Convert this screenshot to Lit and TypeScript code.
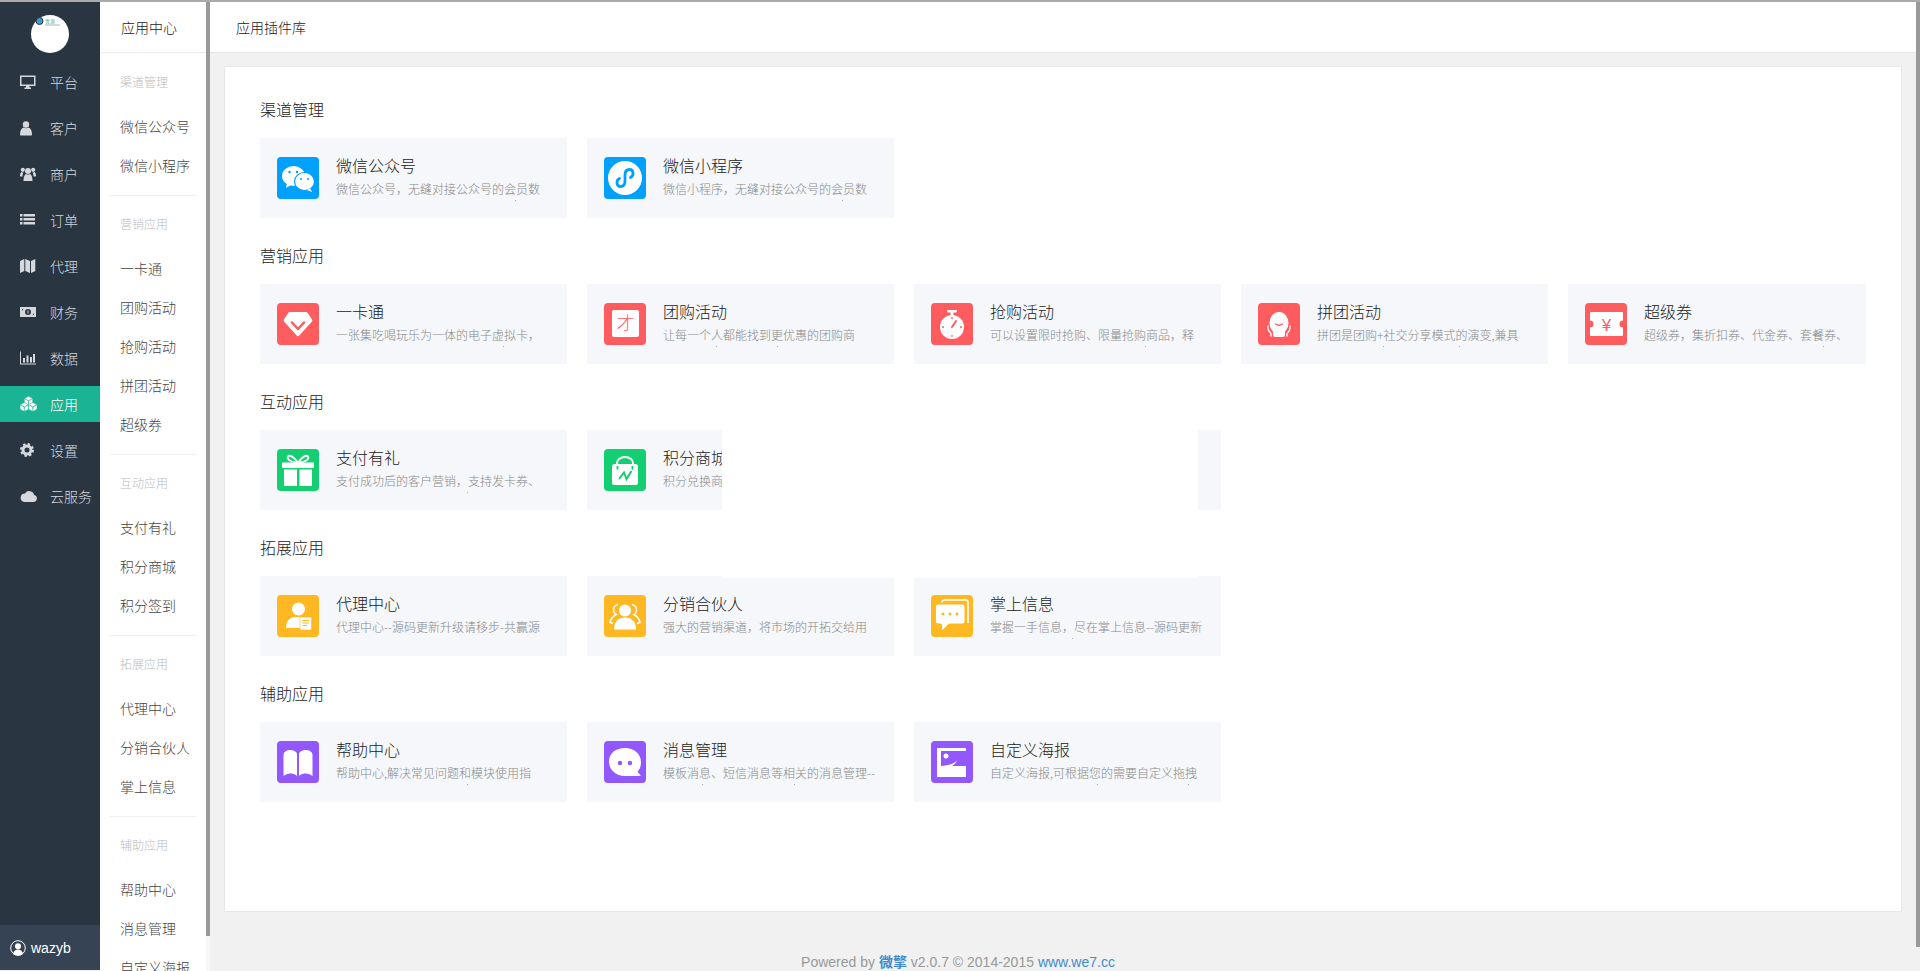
import { LitElement, html, css, svg, TemplateResult } from "lit";
import { customElement } from "lit/decorators.js";

const RED = "#ff5c5f", GREEN = "#14cf72", BLUE = "#00a0ff", AMBER = "#ffb822", PURPLE = "#9257ff";

const hex = (cx: number, cy: number) => svg`
  <polygon points="${cx},${cy - 4.6} ${cx + 4.2},${cy - 2.3} ${cx + 4.2},${cy + 2.3} ${cx},${cy + 4.6} ${cx - 4.2},${cy + 2.3} ${cx - 4.2},${cy - 2.3}" fill="#fff" stroke="#1ab394" stroke-width=".5"/>
  <path d="M${cx - 4.2} ${cy - 2.3}L${cx} ${cy}L${cx + 4.2} ${cy - 2.3}M${cx} ${cy}V${cy + 4.6}" stroke="#1ab394" stroke-width=".8" fill="none"/>`;

const cardIcons: Record<string, TemplateResult> = {
  wechat: svg`<ellipse cx="16.500" cy="19" rx="11.500" ry="10" fill="#fff"/><path d="M10 26l-1 5 5-3z" fill="#fff"/>
    <circle cx="12.500" cy="15" r="1.200" fill="${BLUE}"/><circle cx="20" cy="15" r="1.200" fill="${BLUE}"/>
    <ellipse cx="27.500" cy="24.500" rx="10" ry="9" fill="#fff" stroke="${BLUE}" stroke-width="1.200"/><path d="M33 31l2 4-5-2z" fill="#fff"/>
    <circle cx="24" cy="22" r="1" fill="${BLUE}"/><circle cx="31" cy="22" r="1" fill="${BLUE}"/>`,
  mini: svg`<circle cx="21" cy="21" r="17" fill="#fff"/><path d="M15.500 21.500C12 23 12 29.500 16.500 29.500 20 29.500 21 26.500 21 24V18C21 15.500 22 12.500 25.500 12.500 30 12.500 30 19 26.500 20.500" fill="none" stroke="${BLUE}" stroke-width="2.800" stroke-linecap="round"/>`,
  diamond: svg`<path d="M13 9h16a2 2 0 0 1 1.700.900l4.300 6.300a2 2 0 0 1-.2 2.500L22.500 32.300a2 2 0 0 1-3 0L7.200 18.700a2 2 0 0 1-.2-2.500l4.300-6.300A2 2 0 0 1 13 9z" fill="#fff"/><path d="M15 19.500l6 6.500 6-6.500" fill="none" stroke="${RED}" stroke-width="2.500" stroke-linecap="round" stroke-linejoin="round"/>`,
  square: svg`<rect x="8" y="7" width="27" height="27" rx="2" fill="#fff"/><text x="21.500" y="27" text-anchor="middle" font-size="18" fill="${RED}" font-family="Noto Sans CJK SC, sans-serif">才</text>`,
  watch: svg`<rect x="16" y="7" width="10" height="2.600" rx="1" fill="#fff"/><rect x="19.500" y="9" width="3" height="4" fill="#fff"/><circle cx="21" cy="24" r="12" fill="#fff"/>
    <path d="M21 24l4-6" stroke="${RED}" stroke-width="2" stroke-linecap="round"/><path d="M21 14v2M21 32v2M11 24h2M29 24h2" stroke="${RED}" stroke-width="1.300"/>`,
  face: svg`<ellipse cx="21" cy="20" rx="9.500" ry="11" fill="#fff"/><path d="M15 28h12v4a2 2 0 0 1-2 2h-8a2 2 0 0 1-2-2z" fill="#fff"/><path d="M17.500 21q3.500 2.500 7 0" fill="none" stroke="${RED}" stroke-width="1.300" stroke-linecap="round"/>
    <path d="M10 23q-1 4 3 7.500v2.500M32 23q1 4-3 7.500v2.500" fill="none" stroke="#fff" stroke-width="1.300" stroke-linecap="round"/>`,
  ticket: svg`<path d="M6 9h31a1 1 0 0 1 1 1v7.500a3.500 3.500 0 0 0 0 7V32a1 1 0 0 1-1 1H6a1 1 0 0 1-1-1v-7.500a3.500 3.500 0 0 0 0-7V10a1 1 0 0 1 1-1z" fill="#fff"/><text x="21.500" y="27.500" text-anchor="middle" font-size="17" fill="${RED}" font-family="Liberation Sans, sans-serif">¥</text>`,
  gift: svg`<rect x="5" y="13.500" width="32" height="5.500" fill="#fff"/><rect x="7" y="20.500" width="13" height="16.500" fill="#fff"/><rect x="22.500" y="20.500" width="12.500" height="16.500" fill="#fff"/>
    <path d="M20.500 13C17 8 12.500 5.500 11 7.500 9.500 10 13 13 20 13.500zM21.500 13C25 8 29.500 5.500 31 7.500 32.500 10 29 13 22 13.500z" fill="none" stroke="#fff" stroke-width="1.800"/>`,
  bag: svg`<rect x="8" y="15" width="26" height="21" rx="2.500" fill="#fff"/><path d="M13 18v-4a8 6 0 0 1 16 0v4" fill="none" stroke="#fff" stroke-width="2"/><path d="M13.500 17v3.500M28.500 17v3.500" stroke="${GREEN}" stroke-width="1.800"/><path d="M15 30l5-6.500 2.500 6.500 5-8" fill="none" stroke="${GREEN}" stroke-width="2"/>`,
  agent: svg`<ellipse cx="21.500" cy="14" rx="6.500" ry="6.500" fill="#fff"/><path d="M9 33c0-6 3-11 9-11h6v11z" fill="#fff"/><rect x="23" y="22" width="11.500" height="13" rx="1" fill="#fff" stroke="${AMBER}" stroke-width=".6"/><path d="M25.500 25.500h6.500M25.500 28h6.500M25.500 30.500h4.500" stroke="${AMBER}" stroke-width="1"/>`,
  partner: svg`<circle cx="21" cy="15.500" r="6" fill="#fff"/><path d="M10 34.500c0-7.500 4-12 11-12s11 4.500 11 12z" fill="#fff"/>
    <path d="M14 9.500q-5 1-4.500 6.500 1 3 2.500 3.500-5 3-6 8l3 1M28 9.500q5 1 4.500 6.500-1 3-2.500 3.500 5 3 6 8l-3 1" fill="none" stroke="#fff" stroke-width="1.500"/>`,
  chat: svg`<path d="M11 7.500q0-2.500 2.500-2.500h21q2.500 0 2.500 2.500V28" fill="none" stroke="#fff" stroke-width="1.600"/><path d="M7 9h24.500q2.500 0 2.500 2.500v15q0 2.500-2.500 2.500H18l-7.500 7.500V29H7q-2.500 0-2.500-2.500v-15Q4.500 9 7 9z" fill="#fff" stroke="${AMBER}" stroke-width="1"/><circle cx="12" cy="19" r="1.500" fill="${AMBER}"/><circle cx="19" cy="19" r="1.500" fill="${AMBER}"/><circle cx="26" cy="19" r="1.500" fill="${AMBER}"/>`,
  book: svg`<path d="M6.500 14c0-3 3-5 7-5 3 0 5.500 1.500 6.500 3.500V35c-2-2-4.500-2.500-7-2.500-2.500 0-4.500 1-6.500 2.500zM35.500 14c0-3-3-5-7-5-3 0-5.500 1.500-6.500 3.500V35c2-2 4.500-2.500 7-2.500 2.500 0 4.500 1 6.500 2.500z" fill="#fff"/>`,
  bubble: svg`<path d="M21 7c9 0 16 6 16 14 0 4-1 7-3.500 10l3.500 3.500-2 .5H21c-9 0-16-6-16-14.500S12 7 21 7z" fill="#fff"/><circle cx="16" cy="22" r="2.200" fill="${PURPLE}"/><circle cx="26" cy="22" r="2.200" fill="${PURPLE}"/>`,
  poster: svg`<rect x="6" y="7" width="29" height="29" fill="#fff"/><path d="M10 10h25v15H21q4-2 5-6c-2 3-6 5-16 6z" fill="${PURPLE}"/><circle cx="15" cy="15" r="2.500" fill="#fff"/>`,
};

const navIcons: Record<string, TemplateResult> = {
  desktop: svg`<path fill-rule="evenodd" d="M0 1.500h15.500v10.500H9.500v1.500H11V15H4.500v-1.500H6V12H0zM1.500 3v7.500h12.500V3z"/>`,
  user: svg`<circle cx="6" cy="4.500" r="3.200"/><path d="M0 14.500c0-4 1.500-6.500 3.500-7 1.500 1 3.500 1 5 0 2 .5 3.500 3 3.500 7 0 .5-.5 1-1 1H1c-.5 0-1-.5-1-1z"/>`,
  users: svg`<circle cx="8" cy="5" r="3"/><circle cx="2.800" cy="3.800" r="2.100"/><circle cx="13.200" cy="3.800" r="2.100"/><path d="M3.500 15c0-4 1-6.500 2.500-7 1 .8 3 .8 4 0 1.500.5 2.500 3 2.500 7zM0 10c0-2 .5-3.500 1.500-4 .5.500 1.500.500 2 .500-.5 1-1 2.500-1 4H.5zM16 10c0-2-.5-3.500-1.500-4-.5.500-1.500.500-2 .500.5 1 1 2.500 1 4h2z"/>`,
  list: svg`<path d="M0 2h2.500v2.500H0zM3.500 2H15v2.500H3.500zM0 6h2.500v2.500H0zM3.500 6H15v2.500H3.500zM0 10h2.500v2.500H0zM3.500 10H15v2.500H3.500z"/>`,
  map: svg`<path d="M0 3L4.300 1v12l-4.300 2zM5.300 1l4.700 2v12l-4.700-2zM11 3l4.300-2v12l-4.300 2z"/>`,
  money: svg`<path fill-rule="evenodd" d="M0 3h16v10H0zM8 5a3 3 0 1 0 0 6 3 3 0 0 0 0-6zM2 5h1.500L2 6.500zM14 11h-1.500l1.500-1.500z"/><path d="M7.500 6.500h1v3h-1z"/>`,
  chart: svg`<path d="M0 1.500h1V13.500h15v1H0z"/><path d="M3 8h2v4.500H3zM6.500 5.500h2v7h-2zM10 7h2v5.500h-2zM13 4h2v8.500h-2z"/>`,
  cubes: svg`${hex(8.5, 4.8)}${hex(4.3, 11)}${hex(12.8, 11)}`,
  cog: svg`<circle cx="7" cy="8" r="4" fill="none" stroke="currentColor" stroke-width="3"/><circle cx="7" cy="8" r="6" fill="none" stroke="currentColor" stroke-width="2" stroke-dasharray="2.400 2.300"/>`,
  cloud: svg`<path d="M4 14h9.500a3.500 3.500 0 0 0 .7-6.900A5 5 0 0 0 5 5.500 4.300 4.300 0 0 0 4 14z"/>`,
};

const mainNav = [
  ["desktop", "平台"], ["user", "客户"], ["users", "商户"], ["list", "订单"], ["map", "代理"],
  ["money", "财务"], ["chart", "数据"], ["cubes", "应用"], ["cog", "设置"], ["cloud", "云服务"],
];

interface App { name: string; desc: string; icon: string; dots?: number[]; }
interface Group { title: string; color: string; apps: App[]; }

const groups: Group[] = [
  { title: "渠道管理", color: BLUE, apps: [
    { name: "微信公众号", desc: "微信公众号，无缝对接公众号的会员数", icon: "wechat", dots: [255] },
    { name: "微信小程序", desc: "微信小程序，无缝对接公众号的会员数", icon: "mini", dots: [255] },
  ]},
  { title: "营销应用", color: RED, apps: [
    { name: "一卡通", desc: "一张集吃喝玩乐为一体的电子虚拟卡，", icon: "diamond", dots: [243] },
    { name: "团购活动", desc: "让每一个人都能找到更优惠的团购商", icon: "square", dots: [129, 190] },
    { name: "抢购活动", desc: "可以设置限时抢购、限量抢购商品，释", icon: "watch", dots: [231] },
    { name: "拼团活动", desc: "拼团是团购+社交分享模式的演变,兼具", icon: "face", dots: [142, 218] },
    { name: "超级券", desc: "超级券，集折扣券、代金券、套餐券、", icon: "ticket", dots: [255] },
  ]},
  { title: "互动应用", color: GREEN, apps: [
    { name: "支付有礼", desc: "支付成功后的客户营销，支持发卡券、", icon: "gift", dots: [207] },
    { name: "积分商城", desc: "积分兑换商品，提升会员活跃度", icon: "bag" },
    { name: "积分签到", desc: "积分签到，提升会员活跃度", icon: "bag" },
  ]},
  { title: "拓展应用", color: AMBER, apps: [
    { name: "代理中心", desc: "代理中心--源码更新升级请移步-共赢源", icon: "agent" },
    { name: "分销合伙人", desc: "强大的营销渠道，将市场的开拓交给用", icon: "partner" },
    { name: "掌上信息", desc: "掌握一手信息，尽在掌上信息--源码更新", icon: "chat", dots: [158] },
  ]},
  { title: "辅助应用", color: PURPLE, apps: [
    { name: "帮助中心", desc: "帮助中心,解决常见问题和模块使用指", icon: "book", dots: [207] },
    { name: "消息管理", desc: "模板消息、短信消息等相关的消息管理--", icon: "bubble", dots: [115, 207] },
    { name: "自定义海报", desc: "自定义海报,可根据您的需要自定义拖拽", icon: "poster", dots: [183, 274] },
  ]},
];

@customElement("app-root")
export class AppRoot extends LitElement {
  static styles = css`
    :host {
      display: flex;
      height: 971px;
      box-sizing: border-box;
      border-top: 2px solid #aaa;
      overflow: hidden;
      background: #f1f1f1;
      font-family: "Noto Sans CJK SC", "Liberation Sans", sans-serif;
      font-weight: 300;
      color: #222;
    }
    .side {
      width: 100px;
      flex: none;
      height: 968px;
      background: #2a3542;
      display: flex;
      flex-direction: column;
      align-items: stretch;
      padding-top: 13px;
      box-sizing: border-box;
    }
    .logo {
      width: 38px;
      height: 38px;
      margin: 0 auto 11px;
      display: block;
    }
    .item {
      height: 36px;
      margin-bottom: 10px;
      display: flex;
      align-items: center;
      padding-left: 20px;
      font-size: 14px;
      color: #d5d9dd;
    }
    .item.on { background: #1ab394; color: #fff; }
    .item svg { width: 16px; height: 16px; fill: currentColor; flex: none; margin-right: 14px; overflow: visible; }
    .who {
      margin-top: auto;
      height: 45px;
      background: #364354;
      display: flex;
      align-items: center;
      padding-left: 10px;
      font: 400 14px "Liberation Sans", sans-serif;
      color: #fff;
    }
    .who svg { width: 16px; height: 16px; margin-right: 5px; flex: none; }
    .sub {
      width: 106px;
      flex: none;
      background: #fff;
      overflow: hidden;
    }
    .subhead {
      height: 51px;
      box-sizing: border-box;
      border-bottom: 1px solid #eee;
      padding-left: 21px;
      display: flex;
      align-items: center;
      font-size: 14px;
      color: #222;
    }
    .subgroup {
      margin: 0 10px;
      padding: 19px 0 10px 10px;
      border-bottom: 1px solid #f0f0f0;
    }
    .subgroup + .subgroup { padding-top: 18px; }
    .subgroup:last-child { border-bottom: 0; }
    .sublabel { height: 20px; line-height: 20px; font-size: 12px; color: #bbb; margin-bottom: 15px; }
    .sublink { height: 39px; line-height: 39px; font-size: 14px; color: #444; white-space: nowrap; }
    .track { width: 4px; flex: none; background: #f7f7f7; }
    .track.right { background: #f1f1f1; }
    .thumb { background: #999; }
    .thumb.left { height: 934px; }
    .thumb.far { height: 945px; }
    .main { flex: 1; min-width: 0; display: flex; flex-direction: column; }
    .bar {
      height: 51px;
      box-sizing: border-box;
      flex: none;
      background: #fff;
      border-bottom: 1px solid #e7e7e7;
      display: flex;
      align-items: center;
      padding-left: 26px;
      font-size: 14px;
      color: #222;
    }
    .panel {
      position: relative;
      margin: 13px 14px 0;
      height: 846px;
      box-sizing: border-box;
      background: #fff;
      border: 1px solid #e7e7e7;
      padding: 30px 35px 0;
      flex: none;
    }
    .sec { margin-bottom: 25px; }
    .sec h2 {
      margin: 0 0 17px;
      font-size: 16px;
      font-weight: 300;
      line-height: 24px;
      color: #222;
    }
    .grid {
      display: grid;
      grid-template-columns: repeat(4, 307px) 298px;
      column-gap: 20px;
    }
    .card {
      position: relative;
      height: 80px;
      background: #f5f7fa;
      display: flex;
      align-items: center;
      padding-left: 17px;
      overflow: hidden;
    }
    .ico {
      width: 42px;
      height: 42px;
      border-radius: 4px;
      flex: none;
      display: block;
      margin-right: 17px;
    }
    .txt { min-width: 0; flex: 1; padding-right: 4px; }
    .name { font-size: 16px; line-height: 20px; color: #222; white-space: nowrap; margin-top: -3px; }
    .desc {
      font-size: 12px;
      line-height: 20px;
      margin-top: 4px;
      color: #888;
      white-space: nowrap;
      overflow: hidden;
    }
    .dot { position: absolute; top: 62px; width: 1px; height: 1px; background: #aaa; }
    .veil {
      position: absolute;
      left: 497px;
      top: 358px;
      width: 476px;
      height: 153px;
      background: #fff;
    }
    .foot {
      margin-top: 39px;
      padding-right: 210px;
      text-align: center;
      font: 400 14px/20px "Liberation Sans", sans-serif;
      color: #999;
      white-space: nowrap;
    }
    .foot a { color: #428bca; text-decoration: none; }
    .foot b { font-family: "Noto Sans CJK SC", sans-serif; }
  `;

  render() {
    return html`
      <div class="side">
        <svg class="logo" viewBox="0 0 38 38">
          <circle cx="19" cy="19" r="19" fill="#fff"/>
          <circle cx="8.500" cy="6" r="3.500" fill="#35a0d8" stroke="#333" stroke-width="1"/>
          <text x="14" y="7.500" font-size="5" fill="#1aa37a" font-family="Noto Sans CJK SC, sans-serif">青源</text>
          <path d="M14 10h15" stroke="#7aa" stroke-width=".8"/>
        </svg>
        ${mainNav.map(([ic, label]) => html`
          <div class="item ${label === "应用" ? "on" : ""}">
            <svg viewBox="0 0 16 16">${navIcons[ic]}</svg><span>${label}</span>
          </div>`)}
        <div class="who">
          <svg viewBox="0 0 16 16">
            <circle cx="8" cy="8" r="7.300" fill="none" stroke="#fff" stroke-width="1"/>
            <circle cx="8" cy="6.200" r="3" fill="#fff"/>
            <path d="M3 14c.5-3 2.500-4.500 5-4.500s4.500 1.500 5 4.500q-5 3-10 0z" fill="#fff"/>
          </svg>
          wazyb
        </div>
      </div>
      <div class="sub">
        <div class="subhead">应用中心</div>
        <div>
          ${groups.map((g) => html`
            <div class="subgroup">
              <div class="sublabel">${g.title}</div>
              ${g.apps.map((a) => html`<div class="sublink">${a.name}</div>`)}
            </div>`)}
        </div>
      </div>
      <div class="track"><div class="thumb left"></div></div>
      <div class="main">
        <div class="bar">应用插件库</div>
        <div class="panel">
          ${groups.map((g) => html`
            <div class="sec">
              <h2>${g.title}</h2>
              <div class="grid">
                ${g.apps.map((a) => html`
                  <div class="card">
                    <svg class="ico" viewBox="0 0 42 42" style="background:${g.color}">${cardIcons[a.icon]}</svg>
                    <div class="txt">
                      <div class="name">${a.name}</div>
                      <div class="desc">${a.desc}</div>
                    </div>
                    ${(a.dots || []).map((d) => html`<i class="dot" style="left:${d}px"></i>`)}
                  </div>`)}
              </div>
            </div>`)}
          <div class="veil"></div>
        </div>
        <div class="foot">Powered by <a><b>微擎</b></a> v2.0.7 © 2014-2015 <a>www.we7.cc</a></div>
      </div>
      <div class="track right"><div class="thumb far"></div></div>
    `;
  }
}
